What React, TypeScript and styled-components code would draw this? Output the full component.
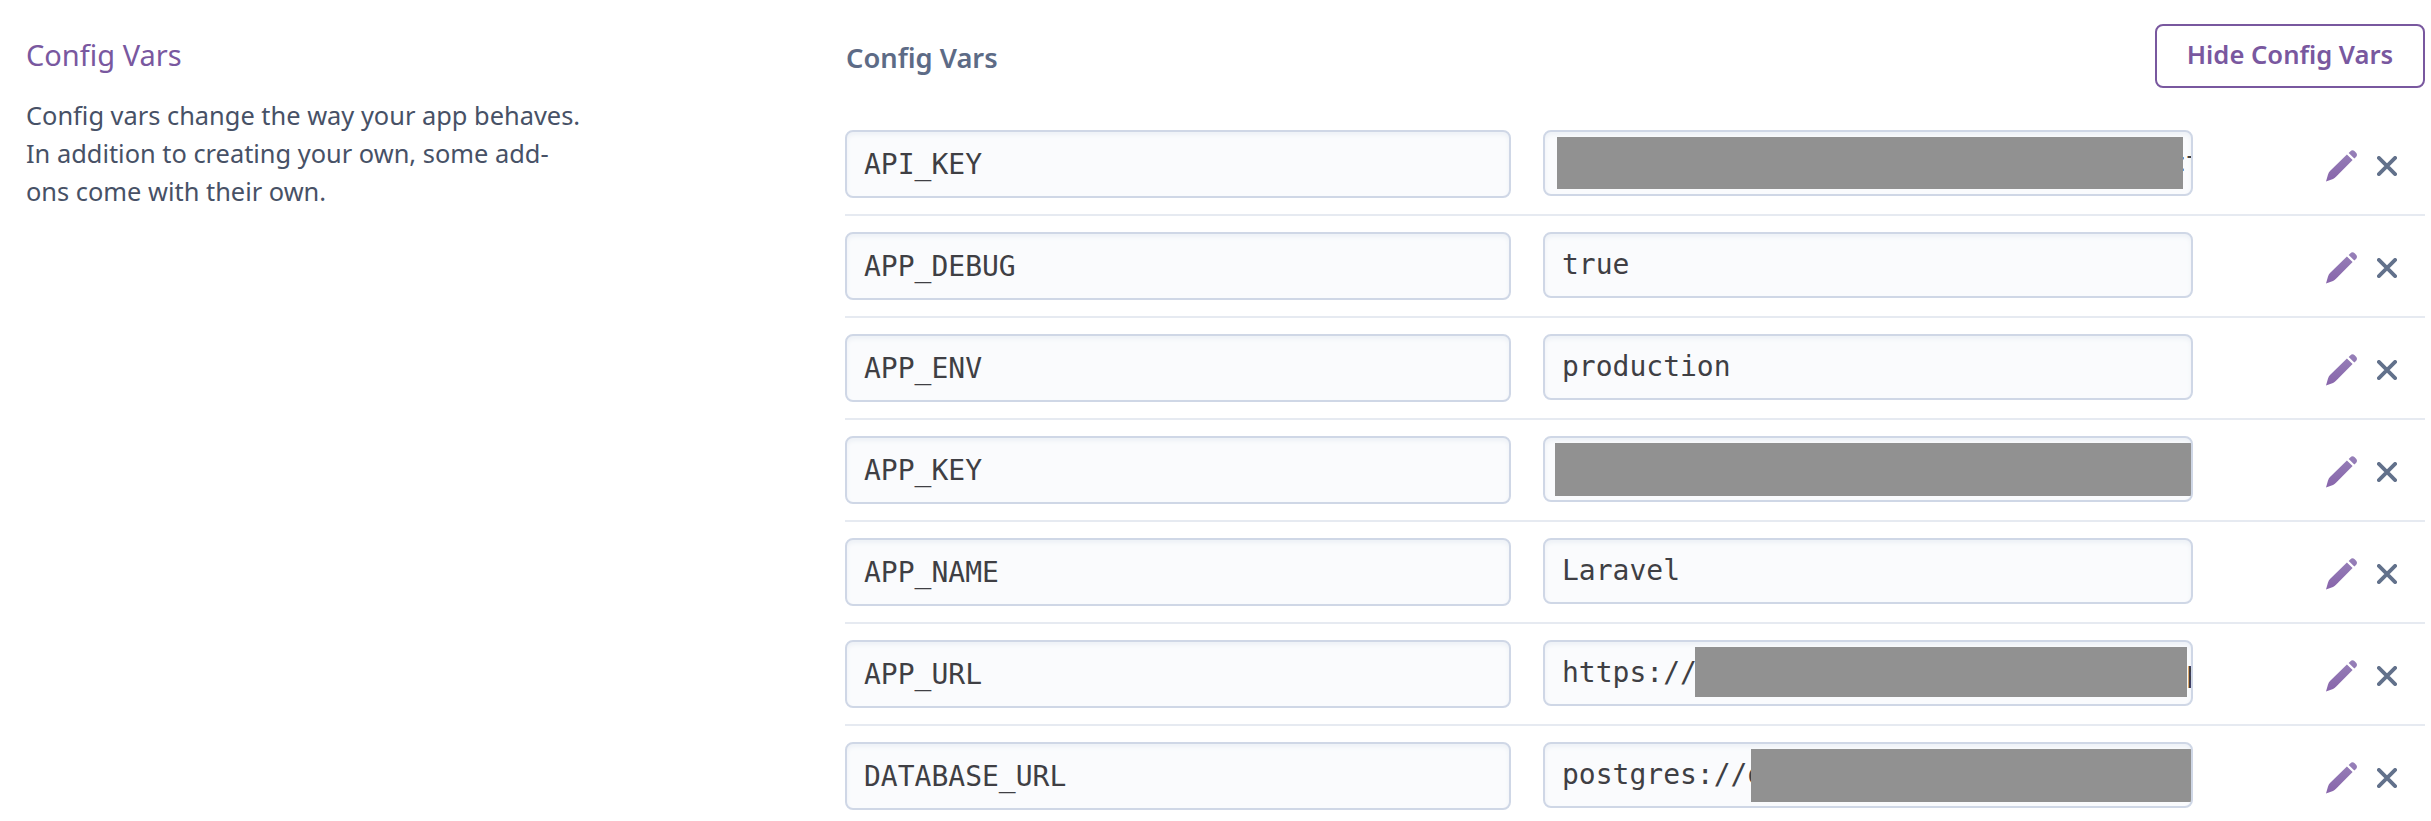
import React from "react";
import styled, { createGlobalStyle } from "styled-components";

const GlobalStyle = createGlobalStyle`
  * { box-sizing: border-box; }
  body {
    margin: 0;
    background: #fff;
    font-family: "Noto Sans", "Open Sans", sans-serif;
    font-feature-settings: "liga" 1;
    overflow: hidden;
  }
`;

const Page = styled.div`
  display: flex;
  height: 821px;
  padding-right: 6px;
  overflow: hidden;
`;

const Sidebar = styled.aside`
  width: 845px;
  flex: none;
  padding: 35px 0 0 26px;
`;

const SidebarTitle = styled.h2`
  margin: 0 0 21px;
  font-size: 29px;
  line-height: 40px;
  font-weight: 400;
  color: #79589f;
`;

const Description = styled.p`
  margin: 0;
  width: 559px;
  font-size: 25.4px;
  line-height: 38px;
  color: #475166;
`;

const Main = styled.main`
  flex: 1;
  min-width: 0;
`;

const Header = styled.header`
  display: flex;
  justify-content: space-between;
  height: 114px;
  padding-top: 24px;
`;

const Heading = styled.h3`
  margin: 14px 0 0 1px;
  font-size: 27.3px;
  line-height: 40px;
  font-weight: 600;
  color: #5d6b86;
`;

const ToggleButton = styled.button`
  width: 270px;
  height: 64px;
  padding: 0 0 4px;
  border: 2px solid #79589f;
  border-radius: 8px;
  background: #fff;
  font-family: inherit;
  font-size: 25.6px;
  font-weight: 600;
  color: #79589f;
  white-space: nowrap;
`;

const Row = styled.div`
  display: flex;
  align-items: flex-start;
  height: 102px;
  padding: 16px 0;
  border-bottom: 2px solid #e6eaf1;
`;

const Field = styled.div<{ $kind: "name" | "value" }>`
  position: relative;
  flex: none;
  width: ${(p) => (p.$kind === "name" ? 666 : 650)}px;
  height: ${(p) => (p.$kind === "name" ? 68 : 66)}px;
  margin-right: ${(p) => (p.$kind === "name" ? 32 : 0)}px;
  padding-left: 17px;
  border: 2px solid #cfd7e6;
  border-radius: 8px;
  background: #fafbfd;
  box-shadow: inset 0 3px 4px #edf1f6;
  overflow: hidden;
  font-family: "DejaVu Sans Mono", monospace;
  font-size: 28px;
  line-height: ${(p) => (p.$kind === "name" ? 66 : 62)}px;
  color: #3f3f44;
  white-space: pre;
`;

const Redaction = styled.span<{ $left: number; $right: number; $height: number }>`
  position: absolute;
  top: 5px;
  left: ${(p) => p.$left}px;
  right: ${(p) => p.$right}px;
  height: ${(p) => p.$height}px;
  background: #919191;
`;

const Tail = styled.span<{ $left: number }>`
  position: absolute;
  top: 0;
  left: ${(p) => p.$left}px;
`;

const Actions = styled.div`
  display: flex;
  align-items: center;
  gap: 19px;
  margin-left: auto;
  padding: 20px 28px 0 0;
`;

const IconButton = styled.button`
  display: flex;
  padding: 0;
  border: 0;
  background: none;
`;

const PencilIcon = () => (
  <svg width="32" height="32" viewBox="0 0 32 32">
    <defs>
      <linearGradient id="pencil" x1="0" y1="0" x2="0" y2="1">
        <stop offset="0" stopColor="#9680b8" />
        <stop offset="1" stopColor="#8865ab" />
      </linearGradient>
    </defs>
    <path
      fill="url(#pencil)"
      d="M0 31.4 L2 24.4 Q2.7 22.4 4 21.1 L20.9 4.4 L26.6 10.1 L10 26.8 Q8.6 28.3 7 29 Z M22.7 2.9 L24.2 1.4 Q26.4 -.6 28.7 1.2 L30.1 2.7 Q31.9 4.8 30 7.1 L28.3 8.6 Z"
    />
  </svg>
);

const CloseIcon = () => (
  <svg width="20" height="20" viewBox="0 0 20 20">
    <path d="M1.9 1.9 L18.1 18.1 M18.1 1.9 L1.9 18.1" stroke="#62718b" strokeWidth="3.8" strokeLinecap="round" />
  </svg>
);

type Var = {
  name: string;
  value: string;
  mask?: { left: number; right: number; height: number };
  tail?: { text: string; left: number };
};

const vars: Var[] = [
  { name: "API_KEY", value: "", mask: { left: 12, right: 8, height: 52 }, tail: { text: "ct", left: 624 } },
  { name: "APP_DEBUG", value: "true" },
  { name: "APP_ENV", value: "production" },
  { name: "APP_KEY", value: "", mask: { left: 10, right: 0, height: 53 } },
  { name: "APP_NAME", value: "Laravel" },
  { name: "APP_URL", value: "https://", mask: { left: 150, right: 4, height: 50 }, tail: { text: "p", left: 641 } },
  { name: "DATABASE_URL", value: "postgres://d", mask: { left: 206, right: 0, height: 53 } },
];

export default function App() {
  return (
    <Page>
      <GlobalStyle />
      <Sidebar>
        <SidebarTitle>Config Vars</SidebarTitle>
        <Description>
          Config vars change the way your app behaves. In addition to creating your own, some add-ons come with their own.
        </Description>
      </Sidebar>
      <Main>
        <Header>
          <Heading>Config Vars</Heading>
          <ToggleButton>Hide Config Vars</ToggleButton>
        </Header>
        {vars.map((v) => (
          <Row key={v.name}>
            <Field $kind="name">{v.name}</Field>
            <Field $kind="value">
              {v.value}
              {v.tail && <Tail $left={v.tail.left}>{v.tail.text}</Tail>}
              {v.mask && <Redaction $left={v.mask.left} $right={v.mask.right} $height={v.mask.height} />}
            </Field>
            <Actions>
              <IconButton aria-label="Edit">
                <PencilIcon />
              </IconButton>
              <IconButton aria-label="Remove">
                <CloseIcon />
              </IconButton>
            </Actions>
          </Row>
        ))}
      </Main>
    </Page>
  );
}
